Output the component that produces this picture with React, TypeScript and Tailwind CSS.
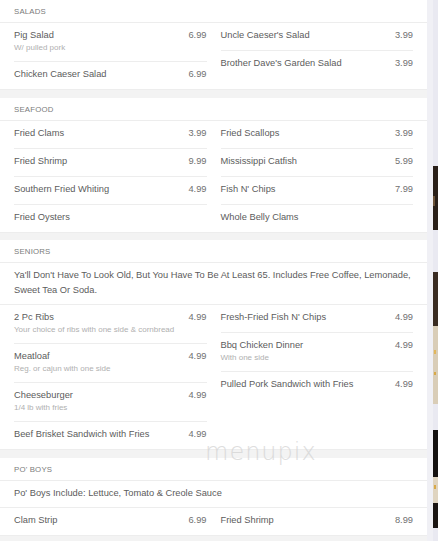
import React from 'react';

type Item = { name: string; price?: string; sub?: string };
type Section = { title: string; desc?: React.ReactNode; left: Item[]; right: Item[] };

const sections: Section[] = [
  {
    title: 'Salads',
    left: [
      { name: 'Pig Salad', price: '6.99', sub: 'W/ pulled pork' },
      { name: 'Chicken Caeser Salad', price: '6.99' },
    ],
    right: [
      { name: "Uncle Caeser's Salad", price: '3.99' },
      { name: "Brother Dave's Garden Salad", price: '3.99' },
    ],
  },
  {
    title: 'Seafood',
    left: [
      { name: 'Fried Clams', price: '3.99' },
      { name: 'Fried Shrimp', price: '9.99' },
      { name: 'Southern Fried Whiting', price: '4.99' },
      { name: 'Fried Oysters' },
    ],
    right: [
      { name: 'Fried Scallops', price: '3.99' },
      { name: 'Mississippi Catfish', price: '5.99' },
      { name: "Fish N' Chips", price: '7.99' },
      { name: 'Whole Belly Clams' },
    ],
  },
  {
    title: 'Seniors',
    desc: (
      <>
        Ya'll Don't Have To Look Old, But You Have To Be At Least 65. Includes Free Coffee, Lemonade,
        <br />
        Sweet Tea Or Soda.
      </>
    ),
    left: [
      { name: '2 Pc Ribs', price: '4.99', sub: 'Your choice of ribs with one side & cornbread' },
      { name: 'Meatloaf', price: '4.99', sub: 'Reg. or cajun with one side' },
      { name: 'Cheeseburger', price: '4.99', sub: '1/4 lb with fries' },
      { name: 'Beef Brisket Sandwich with Fries', price: '4.99' },
    ],
    right: [
      { name: "Fresh-Fried Fish N' Chips", price: '4.99' },
      { name: 'Bbq Chicken Dinner', price: '4.99', sub: 'With one side' },
      { name: 'Pulled Pork Sandwich with Fries', price: '4.99' },
    ],
  },
  {
    title: "Po' Boys",
    desc: "Po' Boys Include: Lettuce, Tomato & Creole Sauce",
    left: [{ name: 'Clam Strip', price: '6.99' }],
    right: [{ name: 'Fried Shrimp', price: '8.99' }],
  },
];

const MenuRow = ({ item, last }: { item: Item; last: boolean }) => (
  <div className={`pt-[5px] ${item.sub ? 'pb-[7px]' : 'pb-[8px]'} ${last ? '' : 'border-b border-[#ededed]'}`}>
    <div className="flex items-center justify-between leading-[14px] text-[9.3px]">
      <span className="text-[#5c5c5c]">{item.name}</span>
      {item.price && <span className="text-[#707070]">{item.price}</span>}
    </div>
    {item.sub && <div className="text-[8px] leading-[12px] text-[#b0b0b0]">{item.sub}</div>}
  </div>
);

const Column = ({ items }: { items: Item[] }) => (
  <div className="flex flex-col">
    {items.map((it, i) => (
      <MenuRow key={it.name} item={it} last={i === items.length - 1} />
    ))}
  </div>
);

const MenuCard = ({ section }: { section: Section }) => (
  <div className="bg-white border-b border-[#ededed]">
    <div className="h-[23px] pt-[1px] px-[14px] flex items-center border-b border-[#ededed] text-[7.8px] uppercase tracking-[0.2px] text-[#7a7a7a]">
      {section.title}
    </div>
    {section.desc && (
      <div className="px-[14px] pt-[5px] pb-[6px] text-[9.3px] leading-[15px] text-[#5c5c5c] border-b border-[#ededed]">
        {section.desc}
      </div>
    )}
    <div className="grid grid-cols-2 gap-x-[14px] px-[14px]">
      <Column items={section.left} />
      <Column items={section.right} />
    </div>
  </div>
);

// thin slice of a photo peeking in at the right edge
const PhotoStrip = () => (
  <svg width="5" height="541" viewBox="0 0 5 541" className="block">
    <rect x="0" y="0" width="5" height="541" fill="#e9e9f1" />
    <rect x="0" y="166" width="5" height="64" fill="#2a2019" />
    <rect x="0" y="196" width="2" height="10" fill="#6b5238" />
    <rect x="0" y="272" width="5" height="54" fill="#3a2c22" />
    <rect x="0" y="326" width="5" height="78" fill="#d9cdb7" />
    <rect x="1" y="350" width="2" height="4" fill="#e1b65c" />
    <rect x="1" y="372" width="2" height="3" fill="#d8a948" />
    <rect x="0" y="430" width="5" height="47" fill="#141110" />
    <rect x="0" y="477" width="5" height="26" fill="#dfd4c0" />
    <rect x="0" y="503" width="5" height="25" fill="#1b1613" />
    <rect x="1" y="485" width="2" height="4" fill="#d8a948" />
  </svg>
);

export default function App() {
  return (
    <div
      className="relative w-[438px] h-[541px] overflow-hidden bg-[#f3f3f3] flex"
      style={{ fontFamily: '"Liberation Sans", Arial, sans-serif' }}
    >
      <div className="w-[427px] flex flex-col">
        {sections.map((s, i) => (
          <div key={s.title} className={i === 0 ? '' : i === 2 ? 'mt-[7px]' : 'mt-[8px]'}>
            <MenuCard section={s} />
          </div>
        ))}
      </div>
      <div className="w-[6px] bg-[#f0f0f5]" />
      <PhotoStrip />

      {/* watermark */}
      <div
        className="absolute left-[205px] top-[440px] text-[24px] leading-[24px] tracking-[1px] font-extralight text-[#d6d6d6] opacity-80 pointer-events-none select-none"
        style={{ fontFamily: '"DejaVu Sans", sans-serif' }}
      >
        menupix
      </div>
    </div>
  );
}
